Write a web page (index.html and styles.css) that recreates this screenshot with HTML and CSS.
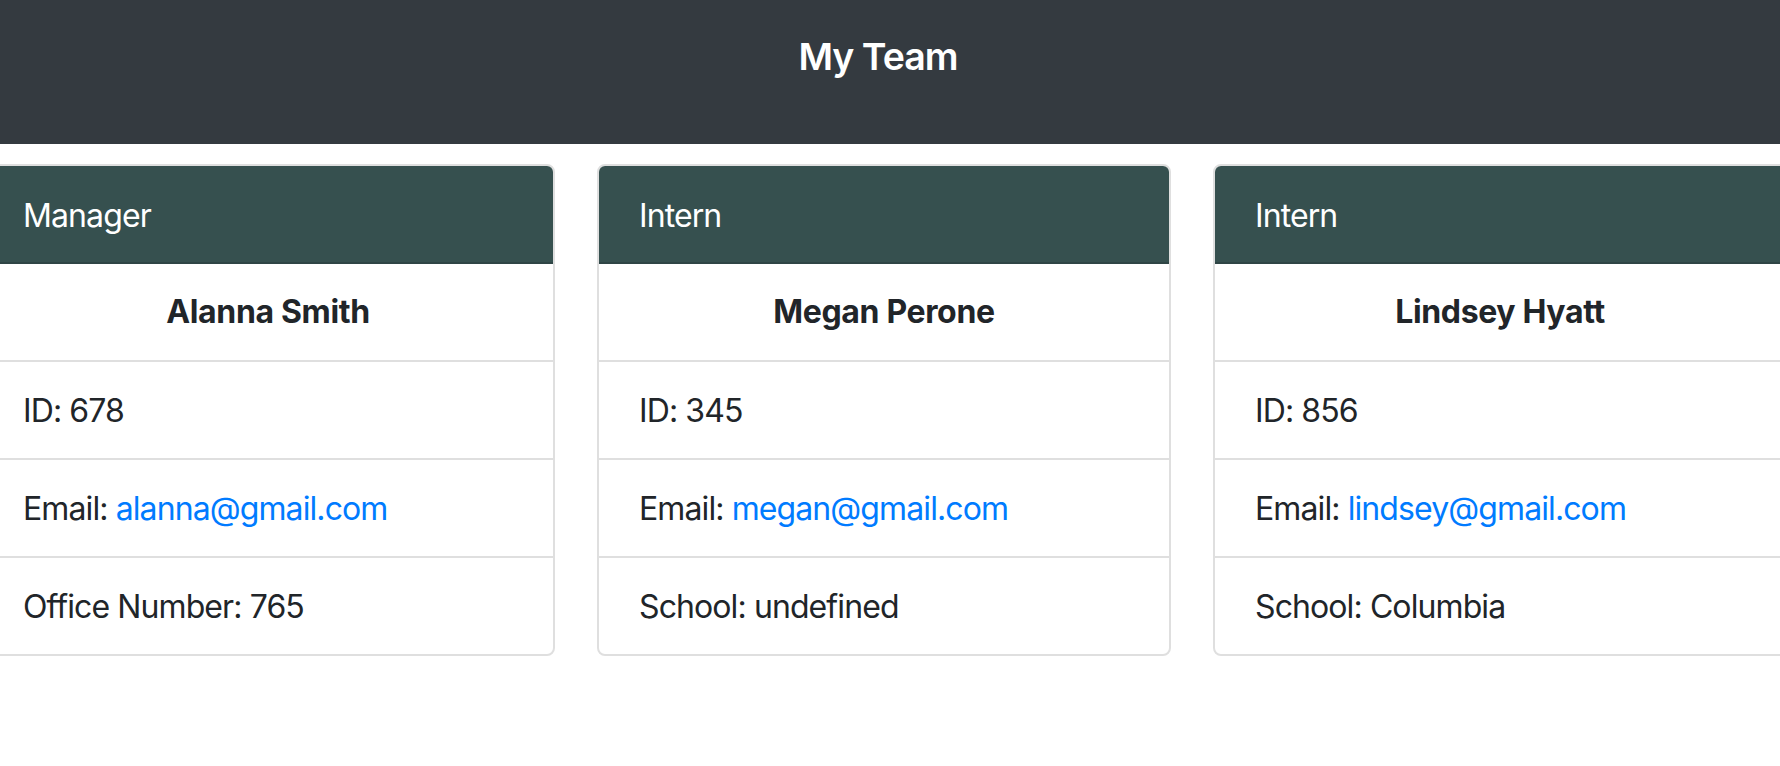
FILE: index.html
```html
<!DOCTYPE html>
<html lang="en">
<head>
<meta charset="utf-8">
<title>My Team</title>
<link rel="stylesheet" href="styles.css">
</head>
<body>
<div class="page">
  <header class="topbar">
    <h1 class="topbar-title">My Team</h1>
  </header>
  <main class="team">
    <section class="card">
      <div class="card-header">Manager</div>
      <div class="card-name">Alanna Smith</div>
      <ul class="list">
        <li class="list-item">ID: 678</li>
        <li class="list-item">Email: <a class="link" href="mailto:alanna@gmail.com">alanna@gmail.com</a></li>
        <li class="list-item">Office Number: 765</li>
      </ul>
    </section>
    <section class="card">
      <div class="card-header">Intern</div>
      <div class="card-name">Megan Perone</div>
      <ul class="list">
        <li class="list-item">ID: 345</li>
        <li class="list-item">Email: <a class="link" href="mailto:megan@gmail.com">megan@gmail.com</a></li>
        <li class="list-item">School: undefined</li>
      </ul>
    </section>
    <section class="card">
      <div class="card-header">Intern</div>
      <div class="card-name">Lindsey Hyatt</div>
      <ul class="list">
        <li class="list-item">ID: 856</li>
        <li class="list-item">Email: <a class="link" href="mailto:lindsey@gmail.com">lindsey@gmail.com</a></li>
        <li class="list-item">School: Columbia</li>
      </ul>
    </section>
  </main>
</div>
</body>
</html>
```
FILE: styles.css
```css
html, body {
  margin: 0;
  padding: 0;
  background: #ffffff;
}
body {
  font-family: "Inter", "Roboto", sans-serif;
  color: #212529;
  font-size: 32px;
  line-height: 48px;
  letter-spacing: -0.9px;
}
.page {
  width: 1780px;
  height: 766px;
  overflow: hidden;
}
.topbar {
  height: 144px;
  box-sizing: border-box;
  background: #343a40;
  padding: 34px 24px 0 0;
}
.topbar-title {
  margin: 0;
  text-align: center;
  color: #ffffff;
  font-size: 37.5px;
  line-height: 45px;
  font-weight: 600;
  letter-spacing: -1px;
}
.team {
  display: flex;
  gap: 42px;
  margin: 20px 0 0 -19px;
}
.card {
  flex: 0 0 574px;
  box-sizing: border-box;
  border: 2px solid #dfdfdf;
  border-radius: 8px;
  overflow: hidden;
  background: #ffffff;
}
.card-header {
  background: #36504f;
  color: #ffffff;
  padding: 26px 40px 22px;
  border-bottom: 2px solid #2f4545;
}
.card-name {
  padding: 24px 40px;
  text-align: center;
  font-weight: 700;
  letter-spacing: -0.35px;
}
.list {
  list-style: none;
  margin: 0;
  padding: 0;
}
.list-item {
  padding: 25px 40px 23px;
  border-top: 2px solid #dfdfdf;
}
.link {
  color: #007bff;
  text-decoration: none;
}
```
